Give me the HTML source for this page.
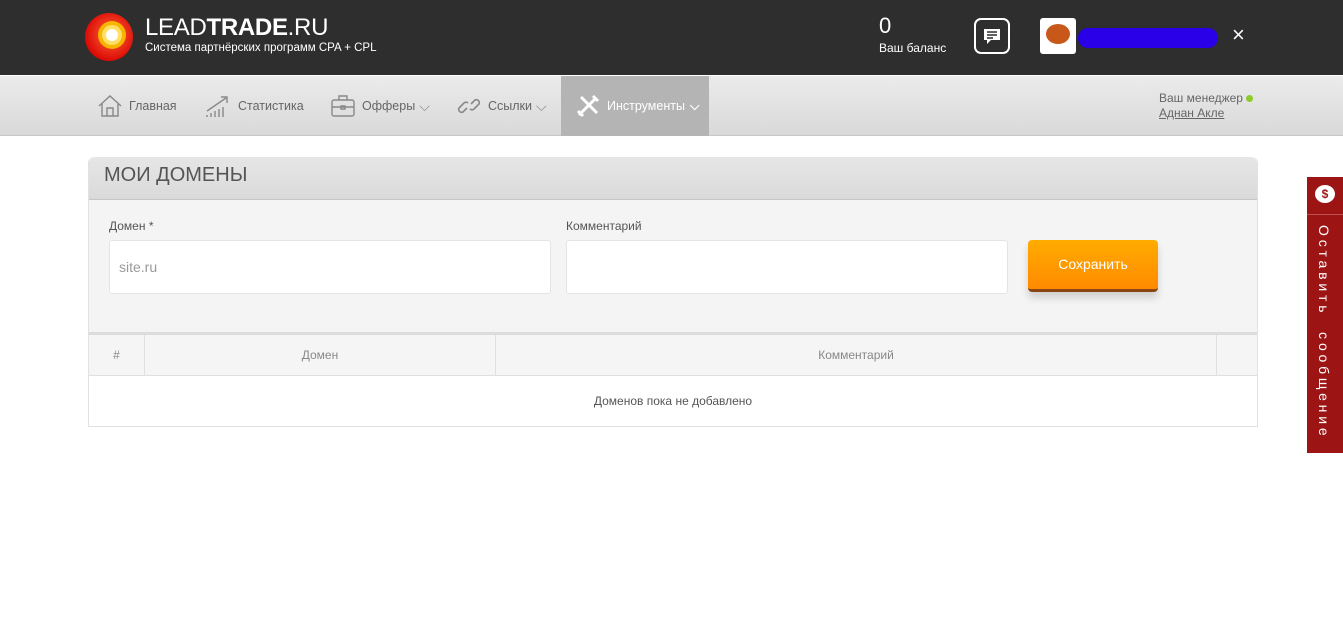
<!DOCTYPE html>
<html><head><meta charset="utf-8"><style>
*{box-sizing:border-box;margin:0;padding:0}
body{width:1343px;height:634px;background:#fff;font-family:"Liberation Sans",sans-serif;position:relative;overflow:hidden}
.hdr{position:absolute;left:0;top:0;width:1343px;height:75px;background:#2e2e2e}
.nav{position:absolute;left:0;top:75px;width:1343px;height:61px;background:linear-gradient(#ebebeb,#d9d9d9);border-top:1px solid #fff;border-bottom:1px solid #c8c8c8}
.ni{position:absolute;top:0;height:60px;display:flex;align-items:center;font-size:12.5px;color:#666}
.ni svg{margin-right:6px}
.abs{position:absolute}
</style></head><body>
<div class="hdr">
 <svg class="abs" style="left:84px;top:12px" width="50" height="50" viewBox="0 0 50 50">
  <defs><radialGradient id="g" cx="55%" cy="45%" r="60%"><stop offset="0" stop-color="#ff6a3a"/><stop offset="1" stop-color="#d80000"/></radialGradient></defs>
  <circle cx="25" cy="25" r="24" fill="url(#g)"/>
  <circle cx="28" cy="23" r="14" fill="#f7b400"/>
  <circle cx="28" cy="23" r="10" fill="#ffe066"/>
  <circle cx="28" cy="23" r="6" fill="#fff"/>
 </svg>
 <div class="abs" style="left:145px;top:14px;color:#fff;font-size:24px;letter-spacing:-0.3px">LEAD<b>TRADE</b>.RU</div>
 <div class="abs" style="left:145px;top:42px;color:#fff;font-size:11.5px">Система партнёрских программ CPA + CPL</div>
 <div class="abs" style="left:879px;top:13px;color:#fff;font-size:22px">0</div>
 <div class="abs" style="left:879px;top:41px;color:#fff;font-size:12px">Ваш баланс</div>
 <div class="abs" style="left:974px;top:18px;width:36px;height:36px;border:2px solid #fff;border-radius:7px"></div>
 <svg class="abs" style="left:983px;top:28px" width="18" height="18" viewBox="0 0 18 18"><path d="M1 1h16v11H8l-4 4v-4H1z" fill="#fff"/><path d="M4 4h10M4 7h10M4 10h6" stroke="#2e2e2e" stroke-width="1.5"/></svg>
 <div class="abs" style="left:1040px;top:18px;width:36px;height:36px;background:#fff;border-radius:3px;overflow:hidden"><div style="position:absolute;left:6px;top:6px;width:24px;height:20px;background:#c8571a;border-radius:50%"></div></div>
 <div class="abs" style="left:1078px;top:28px;width:140px;height:20px;background:#2a00e8;border-radius:10px"></div>
 <div class="abs" style="left:1232px;top:22px;color:#fff;font-size:22px">×</div>
</div>
<div class="nav">
 <div class="ni" style="left:97px"><svg width="26" height="26" viewBox="0 0 26 26" fill="none" stroke="#888" stroke-width="1.4"><path d="M2 13L13 3l11 10M5 11v12h16V11M10 23v-8h6v8"/></svg>Главная</div>
 <div class="ni" style="left:204px"><svg width="28" height="26" viewBox="0 0 28 26" fill="none" stroke="#888" stroke-width="1.4"><path d="M3 24v-2M7 24v-4M11 24v-6M15 24v-8M19 24v-10M3 18L22 5M17 4h6v6"/></svg>Статистика</div>
 <div class="ni" style="left:330px"><svg width="26" height="26" viewBox="0 0 26 26" fill="none" stroke="#888" stroke-width="1.4"><rect x="2" y="7" width="22" height="16" rx="2"/><path d="M9 7V3h8v4M2 14h22M11 13h4v3h-4z"/></svg>Офферы <span style="margin-left:4px;font-size:14px;color:#888">⌵</span></div>
 <div class="ni" style="left:456px"><svg width="26" height="26" viewBox="0 0 26 26" fill="none" stroke="#888" stroke-width="1.6"><path d="M11 15l-4 4a3 3 0 01-4-4l5-5a3 3 0 014 0M15 11l4-4a3 3 0 014 4l-5 5a3 3 0 01-4 0"/></svg>Ссылки <span style="margin-left:4px;font-size:14px;color:#888">⌵</span></div>
 <div class="ni" style="left:561px;width:148px;background:#b4b4b4;color:#fff;padding-left:14px"><svg width="26" height="26" viewBox="0 0 26 26" fill="none" stroke="#fff" stroke-width="3"><path d="M4 22L20 6M6 4l16 16M18 3l5 5M3 18l5 5"/></svg>Инструменты <span style="margin-left:5px;font-weight:bold">⌵</span></div>
 <div class="abs" style="left:627px;top:53px;width:0;height:0;border:7px solid transparent;border-bottom-color:#fff"></div>
 <div class="abs" style="left:1159px;top:15px;font-size:12px;color:#666">Ваш менеджер <span style="display:inline-block;width:7px;height:7px;border-radius:50%;background:#8ccc2a"></span></div>
 <div class="abs" style="left:1159px;top:30px;font-size:12px;color:#666;text-decoration:underline">Аднан Акле</div>
</div>
<div class="abs" style="left:88px;top:157px;width:1170px;height:270px;border:1px solid #e2e2e2;border-top:none;border-radius:6px 6px 0 0">
 <div style="height:43px;background:linear-gradient(#e6e6e6,#dadada);border-bottom:1px solid #c6c6c6;border-radius:6px 6px 0 0;padding:7px 0 0 15px;font-size:20px;color:#555">МОИ ДОМЕНЫ</div>
 <div style="height:135px;background:#f4f4f4;position:relative;border-bottom:3px solid #dcdcdc">
  <div class="abs" style="left:20px;top:19px;font-size:12px;color:#555">Домен *</div>
  <div class="abs" style="left:20px;top:40px;width:442px;height:54px;background:#fff;border:1px solid #e4e4e4;border-radius:3px;padding:18px 9px;font-size:14px;color:#999">site.ru</div>
  <div class="abs" style="left:477px;top:19px;font-size:12px;color:#555">Комментарий</div>
  <div class="abs" style="left:477px;top:40px;width:442px;height:54px;background:#fff;border:1px solid #e4e4e4;border-radius:3px"></div>
  <div class="abs" style="left:939px;top:40px;width:130px;height:52px;background:linear-gradient(#ffac00,#ff8a00);border-radius:4px;border-bottom:3px solid #8a4512;box-shadow:0 6px 8px rgba(0,0,0,.15);color:#fff;font-size:14px;text-align:center;line-height:48px">Сохранить</div>
 </div>
 <div style="height:41px;background:#f5f5f5;border-bottom:1px solid #e0e0e0;position:relative;font-size:12px;color:#888">
  <div class="abs" style="left:0;width:56px;height:40px;border-right:1px solid #e0e0e0;text-align:center;line-height:40px">#</div>
  <div class="abs" style="left:56px;width:351px;height:40px;border-right:1px solid #e0e0e0;text-align:center;line-height:40px">Домен</div>
  <div class="abs" style="left:407px;width:721px;height:40px;border-right:1px solid #e0e0e0;text-align:center;line-height:40px">Комментарий</div>
 </div>
 <div style="height:50px;text-align:center;line-height:50px;font-size:12px;color:#555">Доменов пока не добавлено</div>
</div>
<div class="abs" style="left:1307px;top:177px;width:36px;height:276px;background:#9c1414">
 <div style="height:38px;border-bottom:1px solid #c05050;position:relative"><div style="position:absolute;left:8px;top:8px;width:20px;height:18px;background:#fff;border-radius:50%;color:#9c1414;font-size:12px;font-weight:bold;text-align:center;line-height:18px">$</div></div>
 <div style="writing-mode:vertical-rl;color:#fff;font-size:14px;letter-spacing:3.8px;padding:10px 0 0 9px;word-spacing:8px">Оставить сообщение</div>
</div>
</body></html>
